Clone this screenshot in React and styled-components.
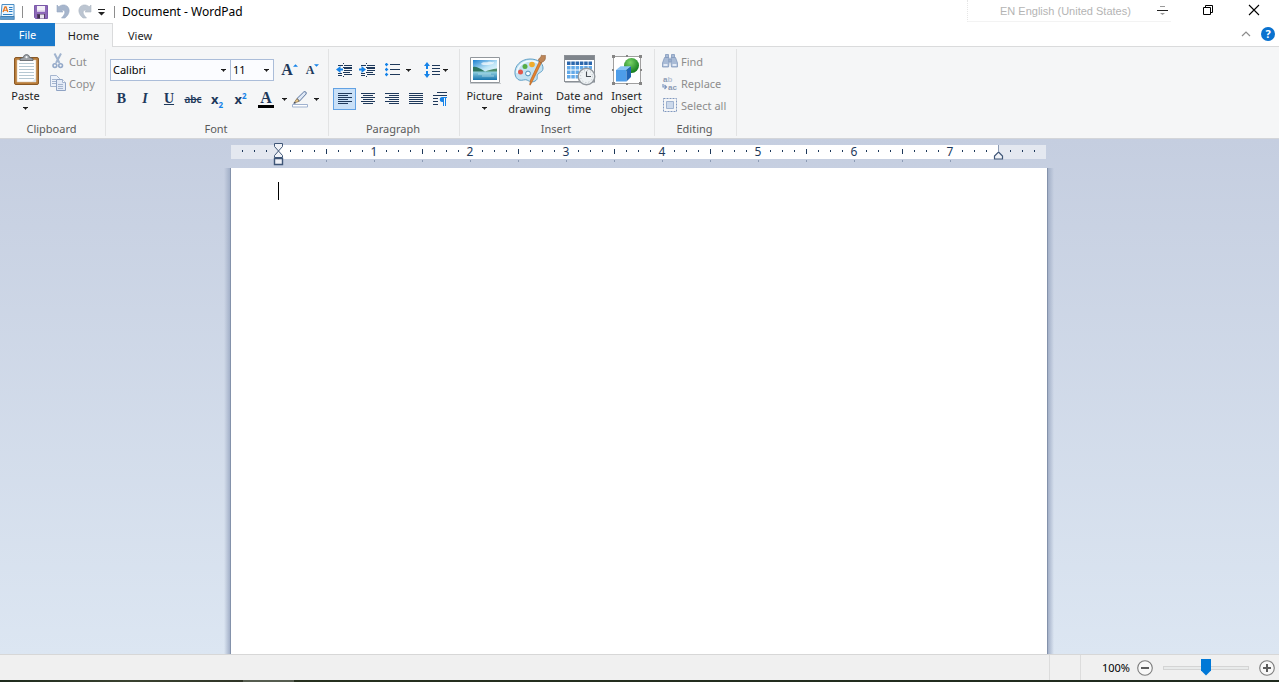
import React, { useState } from "react";

import styled, { createGlobalStyle } from "styled-components";

const NAVY = "#1e395b";
const BLUE = "#1583e9";

const App = () => {
  const [zoom, setZoom] = useState(100);
  const [align, setAlign] = useState("left");

  return (
    <Window>
      <GlobalStyle />
      <TitleBar />
      <Tabs />
      <Ribbon>
        <ClipboardGroup />
        <FontGroup />
        <ParagraphGroup align={align} setAlign={setAlign} />
        <InsertGroup />
        <EditingGroup />
      </Ribbon>
      <Workspace>
        <Ruler />
        <PageRow>
          <PageShadow $side="left" />
          <Page>
            <Caret />
            <DocumentText aria-label="Document text" spellCheck={false} />
          </Page>
          <PageShadow $side="right" />
        </PageRow>
      </Workspace>
      <StatusBar zoom={zoom} setZoom={setZoom} />
      <DesktopEdge />
    </Window>
  );
};

const TitleBar = () => (
  <TitleWrapper>
    <QuickAccess>
      <AppIcon />
      <TitleDivider />
      <QuickButton aria-label="Save">
        <SaveIcon />
      </QuickButton>
      <QuickButton aria-label="Undo">
        <UndoIcon />
      </QuickButton>
      <QuickButton aria-label="Redo">
        <UndoIcon flip />
      </QuickButton>
      <QuickMenuButton aria-label="Customize">
        <svg width="7" height="7" viewBox="0 0 7 7">
          <path d="M0 0h7v1H0z M0 3h7L3.5 6.5z" fill="#222" />
        </svg>
      </QuickMenuButton>
      <TitleDivider />
    </QuickAccess>
    <Title>Document - WordPad</Title>
    <LanguageBar>
      <span>EN English (United States)</span>
      <LanguageButton aria-label="Language options">
        <svg width="11" height="9" viewBox="0 0 11 9">
          <path d="M3 0h5v1H3z" fill="#999" />
          <path d="M0 4h11v1H0z" fill="#222" />
          <path d="M3 7h5L5.5 9z" fill="#999" />
        </svg>
      </LanguageButton>
    </LanguageBar>
    <WindowButtons>
      <WindowButton aria-label="Restore">
        <svg width="10" height="10" viewBox="0 0 10 10" fill="none" stroke="#000">
          <path d="M0.5 2.5h7v7h-7z M2.5 2.5v-2h7v7h-2" />
        </svg>
      </WindowButton>
      <WindowButton aria-label="Close">
        <svg width="12" height="12" viewBox="0 0 12 12" stroke="#000" strokeWidth="1.1">
          <path d="M1 1l10 10M11 1L1 11" />
        </svg>
      </WindowButton>
    </WindowButtons>
  </TitleWrapper>
);

const Tabs = () => (
  <TabStrip>
    <FileTab>File</FileTab>
    <Tab $active>Home</Tab>
    <Tab>View</Tab>
    <TabTools>
      <PlainButton aria-label="Collapse ribbon">
        <svg width="10" height="6" viewBox="0 0 10 6" fill="none" stroke="#8c8c8c" strokeWidth="1.2">
          <path d="M1 5l4-4 4 4" />
        </svg>
      </PlainButton>
      <HelpButton aria-label="Help">?</HelpButton>
    </TabTools>
  </TabStrip>
);

const ClipboardGroup = () => (
  <Group $width="105px">
    <GroupBody>
      <BigButton $width="43px">
        <PasteIcon />
        <BigLabel>Paste</BigLabel>
        <ArrowLine>
          <Arrow />
        </ArrowLine>
      </BigButton>
      <SmallColumn>
        <SmallButton>
          <CutIcon />
          Cut
        </SmallButton>
        <SmallButton>
          <CopyIcon />
          Copy
        </SmallButton>
      </SmallColumn>
    </GroupBody>
    <GroupLabel>Clipboard</GroupLabel>
  </Group>
);

const FontGroup = () => (
  <Group $width="222px">
    <RowsBody>
      <ToolRow>
        <SelectBox $width="121px">
          <Select aria-label="Font family" defaultValue="Calibri">
            <option>Calibri</option>
            <option>Arial</option>
          </Select>
          <Arrow />
        </SelectBox>
        <SelectBox $width="43px" $joined>
          <Select aria-label="Font size" defaultValue="11">
            <option>11</option>
            <option>12</option>
          </Select>
          <Arrow />
        </SelectBox>
        <SizeButtons>
          <Tool aria-label="Grow font">
            <Glyph $size="16px">A</Glyph>
            <SizeMark viewBox="0 0 6 3">
              <path d="M3 0l3 3H0z" fill={BLUE} />
            </SizeMark>
          </Tool>
          <Tool aria-label="Shrink font">
            <Glyph $size="12px">A</Glyph>
            <SizeMark viewBox="0 0 6 3">
              <path d="M0 0h6L3 3z" fill={BLUE} />
            </SizeMark>
          </Tool>
        </SizeButtons>
      </ToolRow>
      <ToolRow>
        <Tool aria-label="Bold">
          <Glyph $size="14px">B</Glyph>
        </Tool>
        <Tool $wide aria-label="Italic">
          <Glyph $size="14px" $italic>
            I
          </Glyph>
        </Tool>
        <Tool $wide aria-label="Underline">
          <Glyph $size="14px" $line="underline">
            U
          </Glyph>
        </Tool>
        <Tool $wide aria-label="Strikethrough">
          <StrikeGlyph>abc</StrikeGlyph>
        </Tool>
        <Tool $wide aria-label="Subscript">
          <ScriptGlyph>
            x<sub>2</sub>
          </ScriptGlyph>
        </Tool>
        <Tool aria-label="Superscript">
          <ScriptGlyph>
            x<sup>2</sup>
          </ScriptGlyph>
        </Tool>
        <ColorTool aria-label="Text color">
          <ColorGlyph>A</ColorGlyph>
        </ColorTool>
        <MenuTool aria-label="Text color menu">
          <Arrow />
        </MenuTool>
        <Tool $wide aria-label="Highlight color">
          <HighlightIcon />
        </Tool>
        <MenuTool aria-label="Highlight color menu">
          <Arrow />
        </MenuTool>
      </ToolRow>
    </RowsBody>
    <GroupLabel>Font</GroupLabel>
  </Group>
);

const alignLines = {
  left: [[0, 14], [0, 10], [0, 14], [0, 10], [0, 14], [0, 10]],
  center: [[0, 14], [2, 10], [0, 14], [2, 10], [0, 14], [2, 10]],
  right: [[0, 14], [4, 10], [0, 14], [4, 10], [0, 14], [4, 10]],
  justify: [[0, 14], [0, 14], [0, 14], [0, 14], [0, 14], [0, 14]],
};

const ParagraphGroup = ({ align, setAlign }) => (
  <Group $width="130px">
    <RowsBody>
      <ToolRow>
        <Tool aria-label="Decrease indent">
          <IndentIcon />
        </Tool>
        <Tool aria-label="Increase indent">
          <IndentIcon increase />
        </Tool>
        <SplitTool aria-label="Start a list">
          <svg width="15" height="14" viewBox="0 0 15 14">
            <path d="M0 1h3v1H0z M1 0h1v3H1z M0 6h3v1H0z M1 5h1v3H1z M0 11h3v1H0z M1 10h1v3H1z" fill={BLUE} stroke={BLUE} strokeWidth="0.4" />
            <path d="M5 1h10v1H5z M5 6h10v1H5z M5 11h10v1H5z" fill={NAVY} />
          </svg>
          <Arrow />
        </SplitTool>
        <SplitTool $tight aria-label="Line spacing">
          <svg width="16" height="16" viewBox="0 0 16 16">
            <path d="M3 0l3 4H4v3H2V4H0z M3 16l3-4H4V9H2v3H0z" fill={BLUE} />
            <path d="M8 3h8v1H8z M8 6h8v1H8z M8 9h8v1H8z M8 12h8v1H8z" fill={NAVY} />
          </svg>
          <Arrow />
        </SplitTool>
      </ToolRow>
      <ToolRow>
        {Object.keys(alignLines).map((name, index) => (
          <Tool
            key={name}
            aria-label={"Align " + name}
            aria-pressed={align === name}
            $active={align === name}
            $wide={index > 0}
            onClick={() => setAlign(name)}
          >
            <svg width="14" height="12" viewBox="0 0 14 12" fill={NAVY}>
              {alignLines[name].map(([x, w], i) => (
                <rect key={i} x={x} y={i * 2} width={w} height="1" />
              ))}
            </svg>
          </Tool>
        ))}
        <Tool $wide aria-label="Paragraph settings">
          <svg width="14" height="14" viewBox="0 0 14 14">
            <path d="M4 0h10v1H4z M0 3h14v1H0z M0 6h5v1H0z M0 9h5v1H0z M0 12h5v1H0z" fill={NAVY} />
            <path d="M9 5h5v1h-1v8h-1V6h-1v8h-1V10H9C6 10 6 5 9 5z" fill={BLUE} />
          </svg>
        </Tool>
      </ToolRow>
    </RowsBody>
    <GroupLabel>Paragraph</GroupLabel>
  </Group>
);

const InsertGroup = () => (
  <Group $width="194px">
    <GroupBody>
      <BigButton $width="41px">
        <PictureIcon />
        <BigLabel>Picture</BigLabel>
        <ArrowLine>
          <Arrow />
        </ArrowLine>
      </BigButton>
      <BigButton $width="49px">
        <PaintIcon />
        <BigLabel>
          Paint
          <br />
          drawing
        </BigLabel>
      </BigButton>
      <BigButton $width="51px">
        <DateIcon />
        <BigLabel>
          Date and
          <br />
          time
        </BigLabel>
      </BigButton>
      <BigButton $width="43px">
        <ObjectIcon />
        <BigLabel>
          Insert
          <br />
          object
        </BigLabel>
      </BigButton>
    </GroupBody>
    <GroupLabel>Insert</GroupLabel>
  </Group>
);

const EditingGroup = () => (
  <Group $width="81px">
    <GroupBody>
      <SmallColumn>
        <SmallButton>
          <FindIcon />
          Find
        </SmallButton>
        <SmallButton>
          <ReplaceIcon />
          Replace
        </SmallButton>
        <SmallButton>
          <SelectAllIcon />
          Select all
        </SmallButton>
      </SmallColumn>
    </GroupBody>
    <GroupLabel>Editing</GroupLabel>
  </Group>
);

// one tick every 12px, a long one every half inch, a number every inch
const ORIGIN = 47;
const ticks = [];
for (let i = -3; i <= 63; i++) {
  if (i !== 0 && i !== 60) ticks.push(i);
}

const Ruler = () => (
  <RulerSvg width="816" height="29" viewBox="0 0 816 29">
    <rect x="0" y="6" width="815" height="14" fill="#e4e8f0" />
    <rect x={ORIGIN} y="6" width="720" height="14" fill="#fff" />
    {ticks.map((i) => {
      const x = ORIGIN + i * 12;
      if (i > 0 && i % 8 === 0) {
        return (
          <text key={i} x={x} y="17" textAnchor="middle">
            {i / 8}
          </text>
        );
      }
      if (i % 4 === 0) {
        return <rect key={i} x={x} y="10" width="1" height="5" fill={NAVY} />;
      }
      return <rect key={i} x={x} y="11" width="1" height="2" fill={NAVY} />;
    })}
    {ticks
      .filter((i) => i > 0 && i < 60 && i % 4 === 0)
      .map((i) => (
        <rect key={i} x={ORIGIN + i * 12} y="21" width="1" height="2" fill="#8d9cb5" />
      ))}
    <g fill="#f0f2f7" stroke="#3f5677">
      <path d="M43.5 4.5h8v3l-4 4.5-4-4.5z" />
      <path d="M47.5 12l4 4.5v2h-8v-2z" />
      <path d="M43.5 19.500h8v6h-8z" strokeWidth="1.4" />
      <path d="M767.500 13l4 4v3h-8v-3z" strokeWidth="1.2" />
    </g>
    <rect x="767" y="6" width="1" height="7" fill="#8d9cb5" />
  </RulerSvg>
);

const StatusBar = ({ zoom, setZoom }) => (
  <StatusWrapper>
    <StatusCell />
    <ZoomCell>
      <ZoomLabel htmlFor="zoom">{zoom}%</ZoomLabel>
      <PlainButton aria-label="Zoom out" onClick={() => setZoom(Math.max(10, zoom - 10))}>
        <ZoomIcon />
      </PlainButton>
      <ZoomSlider
        id="zoom"
        type="range"
        min="10"
        max="190"
        value={zoom}
        onChange={(e) => setZoom(Number(e.target.value))}
      />
      <PlainButton aria-label="Zoom in" onClick={() => setZoom(Math.min(190, zoom + 10))}>
        <ZoomIcon plus />
      </PlainButton>
    </ZoomCell>
  </StatusWrapper>
);

// icons

const Arrow = () => (
  <svg width="5" height="3" viewBox="0 0 5 3">
    <path d="M0 0h5v1H4L2.500 3 1 1H0z" fill="#1c1c1c" />
  </svg>
);

const AppIcon = () => (
  <svg width="15" height="16" viewBox="0 0 15 16">
    <path d="M2 0.5h12v12H1z" fill="#eaf5fd" stroke="#4a8dc4" />
    <path d="M0.3 12.500h14v3h-14z" fill="#5c9bd0" stroke="#35719f" strokeWidth="0.6" />
    <path d="M3 8L5 3h1L7.800 8" fill="none" stroke="#e87722" strokeWidth="1.3" />
    <path d="M4 6.300h3" stroke="#e87722" />
    <path d="M9 3.500h3.500M9 5.500h3.500M9 7.500h3.500M3 10.500h9.500" stroke="#2c7fc6" />
  </svg>
);

const SaveIcon = () => (
  <svg width="14" height="14" viewBox="0 0 14 14">
    <path d="M0.5 0.5h13v13h-12l-1-1z" fill="#8d68b8" stroke="#7a58a8" />
    <path d="M3 1h8v6H3z" fill="#f4f0f8" />
    <path d="M3 5.500h8v1.500H3z" fill="#d3c5e4" />
    <path d="M3 9h8v4.500H3z" fill="#554064" />
    <path d="M6 9.500h4v4H6z" fill="#e9e4ef" />
    <path d="M4.300 10h1.400v3H4.300z" fill="#3b2b49" />
  </svg>
);

const UndoIcon = ({ flip }) => (
  <svg width="14" height="15" viewBox="0 0 14 15">
    <g transform={flip ? "translate(14 0) scale(-1 1)" : undefined}>
      <path
        d="M1 1l1.800 1.800C5.400 0.400 9.400 0.300 11.600 2.600c2.700 3 1.900 7.800-2.600 11.400H5.500c3.200-3.200 4-5.800 2.800-7.200-.8-.9-1.800-.8-2.500-.1L7 8H1z"
        fill={flip ? "#bcc5d1" : "#a6b5cc"}
        stroke={flip ? "#aeb8c5" : "#98a9c2"}
        strokeWidth="0.6"
      />
    </g>
  </svg>
);

const PasteIcon = () => (
  <svg width="32" height="32" viewBox="0 0 32 32">
    <rect x="4.500" y="3.500" width="24" height="27" rx="1.500" fill="#b97d3a" stroke="#8a5824" />
    <path d="M7 6h19v22H7z" fill="#fff" stroke="#d8c6ad" strokeWidth="0.600" />
    <path
      d="M9 9.500h15M9 12.500h15M9 15.500h15M9 18.500h15M9 21.500h15M9 24.500h15"
      stroke="#b6c8d2"
    />
    <path d="M10 6.500V4.600l3.500-1.300c0-3.600 6-3.600 6 0L23 4.600v1.900z" fill="#9ba0a6" stroke="#595e64" strokeWidth="0.800" />
    <circle cx="16.500" cy="3.200" r="1.100" fill="#f4f6f8" />
    <path d="M22 28l4-4v4z" fill="#dde2e6" />
  </svg>
);

const CutIcon = () => (
  <svg width="16" height="16" viewBox="0 0 16 16" fill="none">
    <path d="M4.500 0.500l5 9.500M11 0.500L6 10" stroke="#a1b4cf" strokeWidth="2" />
    <circle cx="4.900" cy="12.600" r="1.900" stroke="#94a9c9" strokeWidth="1.600" />
    <circle cx="10.600" cy="12.600" r="1.900" stroke="#94a9c9" strokeWidth="1.600" />
  </svg>
);

const CopyIcon = () => (
  <svg width="16" height="16" viewBox="0 0 16 16" stroke="#a5b5cf">
    <path d="M0.500 0.500h6l3 3v8h-9z" fill="#edf2fa" />
    <path d="M2 4.500h4M2 6.500h4M2 8.500h4" />
    <path d="M6.500 4.500h6l3 3v8h-9z" fill="#e3eaf6" stroke="#8fa3c4" />
    <path d="M12.500 4.500v3h3" fill="#fff" />
    <path d="M8 9.500h5M8 11.500h5M8 13.500h5" />
  </svg>
);

const HighlightIcon = () => (
  <svg width="17" height="17" viewBox="0 0 17 17">
    <path d="M0.500 13.500h15v2.500h-15z" fill="#fff" stroke="#9fb1cf" />
    <path d="M5 7.500l6.800-6.600c1.500-1 3.200.6 2.200 2.200L7.600 10z" fill="#dfe8f5" stroke="#5c769f" />
    <path d="M5 7.500L2 12l5.200-1.700z" fill="#f1cf8a" stroke="#7c6b50" strokeWidth="0.800" />
    <path d="M1 12.600l1.800-1.600 1 1.400z" fill="#2f4668" />
  </svg>
);

const IndentIcon = ({ increase }) => (
  <svg width="17" height="15" viewBox="0 0 17 15">
    <path
      d="M2 2h5v1H2z M8 2h8v1H8z M8 4h8v2H8z M8 7h8v1H8z M8 9h6v1H8z M2 10h4v1H2z M8 11h8v1H8z M2 12h4v1H2z M7 0h1v1H7z M7 4h1v1H7z M7 9h1v1H7z M7 13h1v1H7z"
      fill={NAVY}
    />
    {increase ? (
      <path d="M0 5.500h2.500V3L7 6.500 2.500 10V7.500H0z" fill={BLUE} />
    ) : (
      <path d="M7 5.500H4.500V3L0 6.500 4.500 10V7.500H7z" fill={BLUE} />
    )}
  </svg>
);

const PictureIcon = () => (
  <svg width="32" height="32" viewBox="0 0 32 32">
    <defs>
      <linearGradient id="sky" x1="0" y1="0" x2="1" y2="1">
        <stop offset="0" stopColor="#1c7fd0" />
        <stop offset="0.600" stopColor="#bfe6f7" />
        <stop offset="1" stopColor="#e9f8fc" />
      </linearGradient>
      <linearGradient id="sea" x1="0" y1="0" x2="0" y2="1">
        <stop offset="0" stopColor="#9fdae4" />
        <stop offset="1" stopColor="#1674ae" />
      </linearGradient>
    </defs>
    <path d="M1.500 3.500h29v25h-29z" fill="#fff" stroke="#92979c" />
    <path d="M1 29.500h31" stroke="#c8cccf" />
    <path d="M4 6h24v12H4z" fill="url(#sky)" />
    <path d="M4 17h24v9H4z" fill="url(#sea)" />
    <path d="M4 13c3-1 5 1 8 2l4 2.500H4z" fill="#2e7560" />
    <path d="M16 17.500c4-1.500 7-2.500 12-3v3z" fill="#4c8d6c" />
    <path d="M12 10c2-3 5-1 7-2s5 1 6 0c1 2-4 3-7 3s-5 0-6-1z" fill="#fff" opacity="0.700" />
    <path d="M9 20h13M13 22h12" stroke="#d6f2f4" opacity="0.600" />
  </svg>
);

const PaintIcon = () => (
  <svg width="32" height="32" viewBox="0 0 32 32">
    <path
      d="M1 20C0 12 7 5 16 5c8 0 13 4 13 9 0 4-3 4-5 6s1 5-3 7c-3 2-6 0-8-1s-5 1-8 0c-2-1-3.600-3-4-6z"
      fill="#c3e2f2"
      stroke="#5f9fc6"
    />
    <path d="M3 19c0-6 6-12 13-12 4 0 8 1 10 4" fill="none" stroke="#f2fafe" strokeWidth="1.500" />
    <circle cx="6.500" cy="18" r="2.500" fill="#e2564a" />
    <circle cx="11" cy="12.500" r="2.500" fill="#55ad45" />
    <circle cx="18" cy="10.500" r="2.800" fill="#f0ac2c" />
    <circle cx="14" cy="19.500" r="2.400" fill="#f7fbfd" stroke="#4a8fba" />
    <path d="M26 6l2 1.600L18.500 27l-2.300 4.200-.5-.4.800-4.800z" fill="#e5832f" stroke="#ac5a18" strokeWidth="0.600" />
    <path d="M24.500 6.500c-.5-2.500 2.500-2 3-5.500 1 1 2 .3 4 .5-.5 2 .5 3-1 5s-2.500 1-3.500 2.500z" fill="#bd8658" stroke="#8e5c35" strokeWidth="0.600" />
  </svg>
);

const DateIcon = () => (
  <svg width="32" height="32" viewBox="0 0 32 32">
    <rect x="0.500" y="1.500" width="30" height="26" fill="#fff" stroke="#8b9096" />
    <path d="M1 2h29v4H1z" fill="#7f858c" />
    <path d="M1 28.500h30" stroke="#b8bdc2" />
    {[0, 1, 2, 3].map((row) =>
      [0, 1, 2, 3, 4, 5].map((col) => (
        <rect
          key={row + "-" + col}
          x={3 + col * 4.3}
          y={7.5 + row * 4.5}
          width="3.5"
          height="3.5"
          fill={row === 0 ? "#2b67ad" : "#62a9e8"}
        />
      ))
    )}
    <circle cx="22.500" cy="22.500" r="8.300" fill="#eef2f4" stroke="#92989e" strokeWidth="1.400" />
    <circle cx="22.500" cy="22.500" r="6" fill="none" stroke="#a4abb2" strokeWidth="0.900" strokeDasharray="0.800 2.340" />
    <path d="M22.500 17.500v5h4.500" fill="none" stroke="#4a5056" strokeWidth="1.100" />
  </svg>
);

const ObjectIcon = () => (
  <svg width="32" height="32" viewBox="0 0 32 32">
    <defs>
      <radialGradient id="ball" cx="0.400" cy="0.300" r="0.700">
        <stop offset="0" stopColor="#7cd468" />
        <stop offset="1" stopColor="#127c1d" />
      </radialGradient>
    </defs>
    <path d="M2.500 2.500h27v27h-27z" fill="#fff" stroke="#a0a0a0" />
    <path
      d="M1 1h3v3H1z M28 1h3v3h-3z M1 28h3v3H1z M28 28h3v3h-3z M15 1h2v2h-2z M15 29h2v2h-2z M1 15h2v2H1z M29 15h2v2h-2z"
      fill="#858585"
    />
    <circle cx="20.500" cy="11.500" r="7.500" fill="url(#ball)" />
    <path d="M5 16h10.500v11.500H5z" fill="#4d9de9" />
    <path d="M5 16l4.500-3.800h10.500L15.500 16z" fill="#8cc4f5" />
    <path d="M15.500 16l4.500-3.800v10.800l-4.500 4.500z" fill="#2266b5" />
  </svg>
);

const FindIcon = () => (
  <svg width="16" height="14" viewBox="0 0 16 14" fill="#a9bbd6" stroke="#8399bd" strokeWidth="0.800">
    <path d="M3.500 0.500h3v3h-3z M9.500 0.500h3v3h-3z" />
    <path d="M2.500 3.500h4.500v5.500l-.5 4h-6V9z M9 3.500h4.500l2 5.500v4h-6L9 9z" />
    <path d="M7 5h2v3H7z" />
    <path d="M1.500 10h4v2h-4z M10.500 10h4v2h-4z" fill="#e4ebf6" stroke="none" />
  </svg>
);

const ReplaceIcon = () => (
  <ReplaceSvg width="16" height="18" viewBox="0 0 16 18">
    <text x="1" y="8" fill="#8b9ab4">
      a<tspan fill="#b7c1d2">b</tspan>
    </text>
    <text x="6" y="16" fill="#8b9ab4">
      ac
    </text>
    <path d="M1 10v3h3M2.500 11l2 2-2 2" fill="none" stroke="#7f97bf" strokeWidth="1.200" />
  </ReplaceSvg>
);

const SelectAllIcon = () => (
  <svg width="16" height="14" viewBox="0 0 16 14">
    <path d="M1.500 0.500h13v13h-13z" fill="none" stroke="#8199bf" strokeDasharray="2 1" />
    <path d="M4.500 3.500h7v7h-7z" fill="#ccd9eb" stroke="#a0b3d0" />
  </svg>
);

const ZoomIcon = ({ plus }) => (
  <svg width="16" height="16" viewBox="0 0 16 16">
    <circle cx="8" cy="8" r="7.300" fill="#f8f8f8" stroke="#7c7c7c" strokeWidth="1.100" />
    <path d={plus ? "M4 7h3V4h2v3h3v2H9v3H7V9H4z" : "M4 7h8v2H4z"} fill="#5c5c5c" />
  </svg>
);

const GlobalStyle = createGlobalStyle`
  * {
    box-sizing: border-box;
  }
  body {
    margin: 0;
    overflow: hidden;
    font-family: "Noto Sans", "Open Sans", sans-serif;
    font-size: 11px;
    color: #1e1e1e;
  }
  button, select, textarea {
    font: inherit;
    color: inherit;
  }
  svg {
    display: block;
    flex-shrink: 0;
  }
`;

const Window = styled.div`
  display: flex;
  flex-direction: column;
  min-height: 100vh;
  background: #fff;
`;

const PlainButton = styled.button`
  display: flex;
  align-items: center;
  justify-content: center;
  padding: 0;
  border: none;
  background: none;
`;

const TitleWrapper = styled.header`
  display: flex;
  align-items: center;
  height: 23px;
  padding-right: 2px;
`;

const QuickAccess = styled.div`
  display: flex;
  align-items: center;
  height: 100%;
`;

const TitleDivider = styled.span`
  width: 1px;
  height: 12px;
  margin: 0 7px;
  background: #8d8d8d;
`;

const QuickButton = styled(PlainButton)`
  width: 22px;
  height: 22px;
`;

const QuickMenuButton = styled(PlainButton)`
  width: 11px;
  height: 24px;
  padding-top: 2px;
`;

const Title = styled.div`
  font-size: 12px;
  color: #000;
`;

const LanguageBar = styled.div`
  display: flex;
  align-items: center;
  justify-content: space-between;
  align-self: flex-start;
  width: 204px;
  height: 22px;
  margin-left: auto;
  margin-right: 14px;
  padding: 0 3px 0 32px;
  border-left: 1px dotted #e6e6e6;
  border-bottom: 1px solid #f3f3f3;
  font-family: "Liberation Sans", Arial, sans-serif;
  color: #b4b4b4;
`;

const LanguageButton = styled(PlainButton)`
  width: 12px;
  height: 20px;
`;

const WindowButtons = styled.div`
  display: flex;
  align-self: flex-start;
`;

const WindowButton = styled(PlainButton)`
  width: 46px;
  height: 20px;
`;

const TabStrip = styled.nav`
  display: flex;
  height: 24px;
  border-bottom: 1px solid #dadbdc;
`;

const Tab = styled(PlainButton)`
  width: ${({ $active }) => ($active ? "58px" : "55px")};
  height: 24px;
  padding-bottom: 1px;
  background: ${({ $active }) => ($active ? "#f5f6f7" : "none")};
  border: 1px solid ${({ $active }) => ($active ? "#dadbdc" : "transparent")};
  border-bottom: none;
  border-left: none;
`;

const FileTab = styled(PlainButton)`
  width: 55px;
  height: 23px;
  background: #1979ca;
  color: #fff;
`;

const TabTools = styled.div`
  display: flex;
  align-items: center;
  gap: 10px;
  margin-left: auto;
  padding: 0 4px 2px 0;
`;

const HelpButton = styled(PlainButton)`
  width: 14px;
  height: 14px;
  border-radius: 50%;
  background: #0a72cf;
  color: #fff;
  font-size: 11px;
  font-weight: 700;
  line-height: 14px;
`;

const Ribbon = styled.section`
  display: flex;
  height: 92px;
  padding: 2px 0;
  background: #f5f6f7;
  border-bottom: 1px solid #d3d5d9;
`;

const Group = styled.div`
  display: flex;
  flex-direction: column;
  flex-shrink: 0;
  box-sizing: content-box;
  width: ${({ $width }) => $width};
  border-right: 1px solid #e2e3e4;
`;

const GroupBody = styled.div`
  display: flex;
  height: 73px;
  padding: 1px 4px 0;
`;

const RowsBody = styled.div`
  display: flex;
  flex-direction: column;
  gap: 7px;
  height: 73px;
  padding: 10px 4px 0;
`;

const GroupLabel = styled.div`
  padding-right: 2px;
  line-height: 14px;
  text-align: center;
  color: #5a5a5a;
`;

const BigButton = styled.button`
  display: flex;
  flex-direction: column;
  align-items: center;
  width: ${({ $width }) => $width};
  height: 68px;
  padding: 4px 0 0;
  border: none;
  background: none;
`;

const BigLabel = styled.span`
  margin-top: 3px;
  line-height: 13px;
  white-space: nowrap;
`;

const ArrowLine = styled.span`
  display: flex;
  align-items: center;
  height: 13px;
`;

const SmallColumn = styled.div`
  display: flex;
  flex-direction: column;
  padding-left: 3px;
`;

const SmallButton = styled.button`
  display: flex;
  align-items: center;
  gap: 3px;
  height: 22px;
  padding: 0;
  border: none;
  background: none;
  color: #8d8d8d;
  white-space: nowrap;
`;

const ToolRow = styled.div`
  display: flex;
  align-items: center;
  height: 22px;
`;

const Tool = styled(PlainButton)`
  width: ${({ $wide }) => ($wide ? "24px" : "23px")};
  height: 22px;
  border: 1px solid ${({ $active }) => ($active ? "#62a2e4" : "transparent")};
  background: ${({ $active }) => ($active ? "#c9e0f7" : "none")};
  color: ${NAVY};
`;

const ColorTool = styled(Tool)`
  width: 28px;
`;

const MenuTool = styled(PlainButton)`
  width: 8px;
  height: 22px;
`;

const SplitTool = styled(PlainButton)`
  gap: ${({ $tight }) => ($tight ? "3px" : "6px")};
  width: 38px;
  height: 22px;
`;

const Glyph = styled.span`
  font-family: "Liberation Serif", "Times New Roman", serif;
  font-size: ${({ $size }) => $size};
  font-weight: 700;
  font-style: ${({ $italic }) => ($italic ? "italic" : "normal")};
  text-decoration: ${({ $line }) => $line || "none"};
  line-height: 18px;
`;

const StrikeGlyph = styled.span`
  font-size: 10px;
  font-weight: 600;
  line-height: 14px;
  text-decoration: line-through;
`;

const ScriptGlyph = styled.span`
  font-size: 13px;
  font-weight: 700;
  line-height: 14px;

  sub,
  sup {
    font-size: 8px;
    line-height: 0;
    color: ${BLUE};
  }
`;

const ColorGlyph = styled(Glyph)`
  width: 16px;
  border-bottom: 3px solid #000;
  font-size: 16px;
  line-height: 14px;
`;

const SizeButtons = styled.div`
  display: flex;
  padding-left: 4px;
`;

const SizeMark = styled.svg`
  align-self: flex-start;
  width: 5px;
  height: 3px;
  margin-top: 4px;
`;

const SelectBox = styled.div`
  position: relative;
  width: ${({ $width }) => $width};
  height: 22px;
  border: 1px solid #abbdd9;
  border-left-width: ${({ $joined }) => ($joined ? "0" : "1px")};
  background: #fbfcff;

  svg {
    position: absolute;
    top: 9px;
    right: 4px;
    pointer-events: none;
  }
`;

const Select = styled.select`
  width: 100%;
  height: 20px;
  padding: 0 12px 2px 2px;
  border: none;
  background: none;
  color: #000;
  appearance: none;
`;

const Workspace = styled.main`
  display: flex;
  flex: 1;
  flex-direction: column;
  align-items: center;
  padding-right: 1px;
  background: linear-gradient(#c5cee0, #dce6f2);
`;

const RulerSvg = styled.svg`
  font-size: 12px;
  fill: ${NAVY};
`;

const ReplaceSvg = styled.svg`
  font-family: "Liberation Sans", Arial, sans-serif;
  font-size: 8px;
  font-weight: 700;
`;

const PageRow = styled.div`
  display: flex;
  flex: 1;
`;

const PageShadow = styled.div`
  width: 7px;
  border-${({ $side }) => ($side === "left" ? "right" : "left")}: 1px solid #8492ab;
  background: linear-gradient(to ${({ $side }) => $side}, #a3b0c8, transparent);
`;

const Page = styled.article`
  display: flex;
  width: 816px;
  padding: 14px 47px;
  background: #fff;
`;

const Caret = styled.span`
  width: 1px;
  height: 18px;
  background: #000;
`;

const DocumentText = styled.textarea`
  flex: 1;
  padding: 0;
  border: none;
  outline: none;
  resize: none;
  background: none;
  font-size: 15px;
`;

const StatusWrapper = styled.footer`
  display: flex;
  justify-content: flex-end;
  height: 26px;
  border-top: 1px solid #d7d7d7;
  background: #f0f0f0;
`;

const StatusCell = styled.div`
  width: 31px;
  border-left: 1px solid #dcdcdc;
`;

const ZoomCell = styled.div`
  display: flex;
  align-items: center;
  justify-content: flex-end;
  width: 199px;
  padding-right: 4px;
  border-left: 1px solid #dcdcdc;
`;

const ZoomLabel = styled.label`
  margin-right: 7px;
  color: #000;
`;

const ZoomSlider = styled.input`
  width: 86px;
  height: 17px;
  margin: 0 10px;
  background: none;
  appearance: none;

  &::-webkit-slider-runnable-track {
    height: 4px;
    border: 1px solid #d4d4d4;
    background: #e8eaea;
  }

  &::-webkit-slider-thumb {
    width: 10px;
    height: 17px;
    margin-top: -8px;
    background: #0078d7;
    clip-path: polygon(0 0, 100% 0, 100% 70%, 50% 100%, 0 70%);
    appearance: none;
  }
`;

const DesktopEdge = styled.div`
  height: 2px;
  background: linear-gradient(to right, #1d2a1c, #3a4230 10%, #2f3527 19%, #565d50 19%, #565d50 23%, #26301f 23%, #1f2a1e);
`;

export default App;
